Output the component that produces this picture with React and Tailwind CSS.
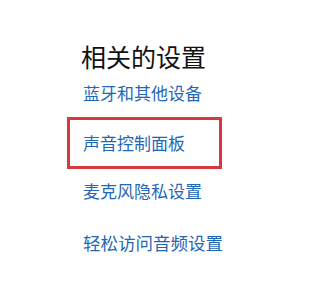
import React from "react";

const font = { fontFamily: '"Noto Sans CJK SC", "Noto Sans", sans-serif' };

function App() {
  return (
    <div className="w-[319px] h-[306px] bg-white overflow-hidden" style={font}>
      <div className="flex flex-col items-start pl-[67px] pt-[42px]">
        {/* 标题 */}
        <h2 className="ml-[14px] text-[25px] leading-[28px] text-[#111] font-normal">
          相关的设置
        </h2>
        <a className="ml-[16px] mt-[12px] text-[17px] leading-[22px] text-[#1f68b5]">
          蓝牙和其他设备
        </a>
        {/* 高亮项 */}
        <div className="mt-[13px] w-[155px] h-[52px] border-[3px] border-[#d8393f] flex items-center pl-[13px]">
          <a className="text-[17px] leading-[22px] text-[#1f68b5]">声音控制面板</a>
        </div>
        <a className="ml-[16px] mt-[11px] text-[17px] leading-[22px] text-[#1f68b5]">
          麦克风隐私设置
        </a>
        <a className="ml-[16px] mt-[30px] text-[17.5px] leading-[22px] text-[#1f68b5]">
          轻松访问音频设置
        </a>
      </div>
    </div>
  );
}

export default App;
